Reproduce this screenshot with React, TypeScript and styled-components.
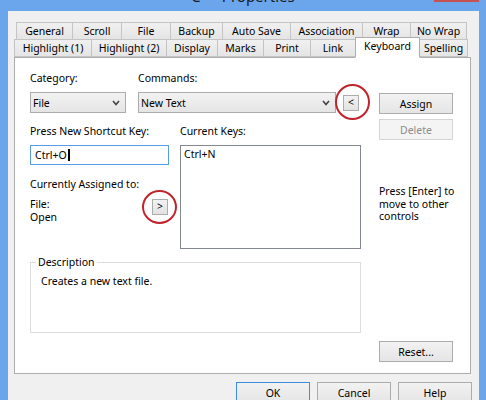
import React from 'react'
import styled, { createGlobalStyle } from 'styled-components'

const GlobalStyle = createGlobalStyle`
  html, body {
    margin: 0;
    height: 400px;
    overflow: hidden;
  }
  body {
    background: #6ba6ec;
    font-family: "Noto Sans", "Open Sans", sans-serif;
    font-size: 10.5px;
    color: #000;
  }
`

const Frame = styled.div`
  width: 486px;
  height: 400px;
  display: flex;
  flex-direction: column;
  background: #6ba6ec;
`

const TitleBar = styled.div`
  height: 11px;
  flex: none;
  display: grid;
  grid-template-columns: 1fr auto 1fr;
  overflow: hidden;
`

const TitleText = styled.div`
  grid-column: 2;
  margin-top: -11px;
  font-size: 15px;
  line-height: 15px;
  color: #1a1a1a;
  white-space: nowrap;
`

const CloseBox = styled.div`
  grid-column: 3;
  justify-self: end;
  width: 45px;
  height: 2px;
  margin-right: 7px;
  background: #c75050;
`

const FrameBody = styled.div`
  flex: 1;
  display: flex;
  padding: 0 7px 0 8px;
`

const Client = styled.div`
  flex: 1;
  background: #f0f0f0;
  padding: 11px 8px 0 6px;
  display: flex;
  flex-direction: column;
`

const TabRow = styled.div<{ $inset?: number }>`
  display: flex;
  align-items: flex-end;
  height: 18px;
  padding-left: ${({ $inset }) => $inset ?? 0}px;
  & + & {
    margin-top: -1px;
  }
`

const Tab = styled.div<{ $w: number; $active?: boolean }>`
  box-sizing: border-box;
  width: ${({ $w }) => $w + 1}px;
  height: ${({ $active }) => ($active ? 21 : 18)}px;
  margin-bottom: ${({ $active }) => ($active ? -1 : 0)}px;
  position: ${({ $active }) => ($active ? 'relative' : 'static')};
  z-index: ${({ $active }) => ($active ? 1 : 0)};
  border: 1px solid ${({ $active }) => ($active ? '#adadad' : '#c4c4c4')};
  border-bottom-color: ${({ $active }) => ($active ? '#fff' : '#c4c4c4')};
  background: ${({ $active }) =>
    $active ? '#fff' : 'linear-gradient(#f0f0f0, #e5e5e5)'};
  display: flex;
  justify-content: center;
  align-items: center;
  padding-bottom: ${({ $active }) => ($active ? 3 : 0)}px;
  white-space: nowrap;
  & + & {
    margin-left: -1px;
  }
`

const Panel = styled.div`
  box-sizing: border-box;
  height: 317px;
  background: #fff;
  border: 1px solid #adadad;
  padding: 14px 0 0 15px;
  display: flex;
`

const LeftCol = styled.div`
  width: 331px;
  display: flex;
  flex-direction: column;
`

const RightCol = styled.div`
  width: 74px;
  margin-left: 18px;
  padding-top: 21px;
  display: flex;
  flex-direction: column;
`

const Label = styled.div<{ $w?: number; $top?: number }>`
  line-height: 13px;
  white-space: nowrap;
  width: ${({ $w }) => ($w ? `${$w}px` : 'auto')};
  margin-top: ${({ $top }) => $top ?? 0}px;
`

const Row = styled.div<{ $top?: number }>`
  display: flex;
  align-items: center;
  margin-top: ${({ $top }) => $top ?? 0}px;
`

const Select = styled.div<{ $w: number; $gap?: number }>`
  box-sizing: border-box;
  width: ${({ $w }) => $w}px;
  height: 21px;
  margin-left: ${({ $gap }) => $gap ?? 0}px;
  border: 1px solid #acacac;
  background: linear-gradient(#f2f2f2, #e5e5e5);
  display: flex;
  align-items: center;
  justify-content: space-between;
  padding: 0 5px 0 2px;
`

const Chevron = () => (
  <svg width="8" height="6" viewBox="0 0 8 6">
    <polyline points="1,1 4,4.5 7,1" fill="none" stroke="#444" strokeWidth="1.6" />
  </svg>
)

const Marked = styled.span<{ $gap?: number; $top?: number }>`
  position: relative;
  display: inline-flex;
  margin-left: ${({ $gap }) => $gap ?? 0}px;
  margin-top: ${({ $top }) => $top ?? 0}px;
`

const RedCircle = styled.span<{ $l: number; $t: number; $w: number; $h: number }>`
  position: absolute;
  left: ${({ $l }) => $l}px;
  top: ${({ $t }) => $t}px;
  width: ${({ $w }) => $w}px;
  height: ${({ $h }) => $h}px;
  box-sizing: border-box;
  border: 2px solid #c0232a;
  border-radius: 50%;
  pointer-events: none;
`

const TinyButton = styled.div`
  box-sizing: border-box;
  width: 16px;
  height: 16px;
  border: 1px solid #acacac;
  background: linear-gradient(#f2f2f2, #e2e2e2);
  display: flex;
  justify-content: center;
  align-items: center;
  line-height: 1;
  padding-bottom: 1px;
`

const KeysGrid = styled.div`
  display: grid;
  grid-template-columns: 150px 181px;
  row-gap: 7px;
  margin-top: 12px;
`

const KeyInput = styled.div`
  box-sizing: border-box;
  width: 139px;
  height: 20px;
  border: 1px solid #569de5;
  display: flex;
  align-items: center;
  padding-left: 4px;
`

const Caret = styled.span`
  display: inline-block;
  width: 2px;
  height: 12px;
  background: #000;
  margin-left: 1px;
`

const Stack = styled.div`
  display: flex;
  flex-direction: column;
`

const AssignedRow = styled.div`
  display: flex;
  align-items: flex-start;
  margin-top: 7px;
`

const Lines = styled.div<{ $w?: number; $lh?: number }>`
  width: ${({ $w }) => ($w ? `${$w}px` : 'auto')};
  line-height: ${({ $lh }) => $lh ?? 13}px;
  white-space: nowrap;
`

const ListBox = styled.div`
  box-sizing: border-box;
  height: 104px;
  border: 1px solid #828790;
  padding: 2px 3px;
  line-height: 13px;
`

const GroupBox = styled.fieldset`
  margin: 7px 0 0;
  padding: 0;
  border: 1px solid #dcdcdc;
  min-width: 0;
`

const GroupTitle = styled.legend`
  margin-left: 5px;
  padding: 0 2px;
  line-height: 13px;
`

const GroupBody = styled.div`
  box-sizing: border-box;
  height: 63px;
  padding: 6px 0 0 10px;
  line-height: 13px;
`

const Button = styled.div<{ $default?: boolean; $disabled?: boolean; $top?: number }>`
  box-sizing: border-box;
  width: 74px;
  height: 21px;
  flex: none;
  margin-top: ${({ $top }) => ($top === undefined ? 0 : `${$top}px`)};
  border: 1px solid
    ${({ $default, $disabled }) => ($default ? '#3c8fe0' : $disabled ? '#d5d5d5' : '#acacac')};
  background: ${({ $disabled }) =>
    $disabled ? '#f4f4f4' : 'linear-gradient(#f2f2f2, #e5e5e5)'};
  color: ${({ $disabled }) => ($disabled ? '#8d8d8d' : '#000')};
  display: flex;
  justify-content: center;
  align-items: center;
`

const Hint = styled(Lines)`
  margin-top: 45px;
`

const ResetButton = styled(Button)`
  margin-top: auto;
  margin-bottom: 11px;
`

const Footer = styled.div`
  display: flex;
  justify-content: flex-end;
  gap: 7px;
  margin: 8px -1px 0 0;
`

const row1 = [
  ['General', 56],
  ['Scroll', 49],
  ['File', 49],
  ['Backup', 52],
  ['Auto Save', 68],
  ['Association', 72],
  ['Wrap', 48],
  ['No Wrap', 56],
] as const

const row2 = [
  ['Highlight (1)', 77],
  ['Highlight (2)', 75],
  ['Display', 51],
  ['Marks', 46],
  ['Print', 47],
  ['Link', 45],
  ['Keyboard', 64],
  ['Spelling', 48],
] as const

export default function App() {
  return (
    <>
      <GlobalStyle />
      <Frame>
        <TitleBar>
          <TitleText>C++ Properties</TitleText>
          <CloseBox />
        </TitleBar>
        <FrameBody>
          <Client>
            <TabRow $inset={2}>
              {row1.map(([name, w]) => (
                <Tab key={name} $w={w}>
                  {name}
                </Tab>
              ))}
            </TabRow>
            <TabRow>
              {row2.map(([name, w]) => (
                <Tab key={name} $w={w} $active={name === 'Keyboard'}>
                  {name}
                </Tab>
              ))}
            </TabRow>
            <Panel>
              <LeftCol>
                <Row>
                  <Label $w={108}>Category:</Label>
                  <Label>Commands:</Label>
                </Row>
                <Row $top={7}>
                  <Select $w={96}>
                    File
                    <Chevron />
                  </Select>
                  <Select $w={198} $gap={12}>
                    New Text
                    <Chevron />
                  </Select>
                  <Marked $gap={7}>
                    <TinyButton>&lt;</TinyButton>
                    <RedCircle $l={-8} $t={-11} $w={35} $h={36} />
                  </Marked>
                </Row>
                <KeysGrid>
                  <Label>Press New Shortcut Key:</Label>
                  <Label>Current Keys:</Label>
                  <Stack>
                    <KeyInput>
                      Ctrl+O
                      <Caret />
                    </KeyInput>
                    <Label $top={13}>Currently Assigned to:</Label>
                    <AssignedRow>
                      <Lines $w={122}>
                        File:
                        <br />
                        Open
                      </Lines>
                      <Marked $top={1}>
                        <TinyButton>&gt;</TinyButton>
                        <RedCircle $l={-10} $t={-9} $w={35} $h={34} />
                      </Marked>
                    </AssignedRow>
                  </Stack>
                  <ListBox>Ctrl+N</ListBox>
                </KeysGrid>
                <GroupBox>
                  <GroupTitle>Description</GroupTitle>
                  <GroupBody>Creates a new text file.</GroupBody>
                </GroupBox>
              </LeftCol>
              <RightCol>
                <Button>Assign</Button>
                <Button $disabled $top={5}>
                  Delete
                </Button>
                <Hint $lh={12.5}>
                  Press [Enter] to
                  <br />
                  move to other
                  <br />
                  controls
                </Hint>
                <ResetButton>Reset...</ResetButton>
              </RightCol>
            </Panel>
            <Footer>
              <Button $default>OK</Button>
              <Button>Cancel</Button>
              <Button>Help</Button>
            </Footer>
          </Client>
        </FrameBody>
      </Frame>
    </>
  )
}
